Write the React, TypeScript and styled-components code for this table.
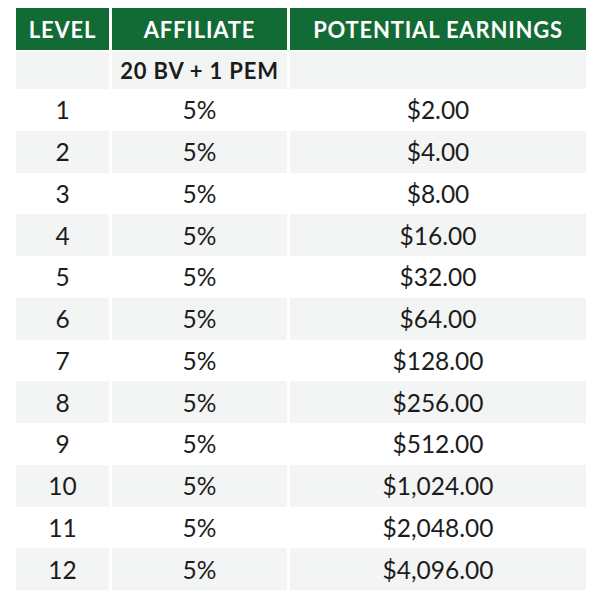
import React from "react";
import styled, { createGlobalStyle } from "styled-components";

const Global = createGlobalStyle`
  html, body { margin: 0; padding: 0; background: #ffffff; }
  body { font-family: "Lato", "Open Sans", sans-serif; }
`;

const Page = styled.div`
  padding: 8px 14px 10px 16px;
  width: 570px;
`;

const Table = styled.div`
  display: flex;
  flex-direction: column;
`;

const Row = styled.div<{ $h: number; $gapBelow?: number }>`
  display: grid;
  grid-template-columns: 93px 175px 296px;
  column-gap: 3px;
  height: ${(p) => p.$h}px;
  margin-bottom: ${(p) => p.$gapBelow ?? 0}px;
`;

const HeadCell = styled.div`
  background: #126a35;
  color: #ffffff;
  font-family: "Lato", sans-serif;
  font-weight: 700;
  font-size: 22px;
  letter-spacing: 0.8px;
  display: flex;
  align-items: center;
  justify-content: center;
`;

const Cell = styled.div<{ $striped: boolean; $bold?: boolean }>`
  background: ${(p) => (p.$striped ? "#f3f4f4" : "#ffffff")};
  color: #1c1c1c;
  font-family: "Lato", sans-serif;
  font-weight: ${(p) => (p.$bold ? 700 : 400)};
  font-size: ${(p) => (p.$bold ? "22px" : "24.5px")};
  letter-spacing: ${(p) => (p.$bold ? "0.8px" : "0")};
  display: flex;
  align-items: center;
  justify-content: center;
`;

const earnings = [
  "$2.00",
  "$4.00",
  "$8.00",
  "$16.00",
  "$32.00",
  "$64.00",
  "$128.00",
  "$256.00",
  "$512.00",
  "$1,024.00",
  "$2,048.00",
  "$4,096.00",
];

export default function App() {
  return (
    <>
      <Global />
      <Page>
        <Table>
          <Row $h={42} $gapBelow={2}>
            <HeadCell>LEVEL</HeadCell>
            <HeadCell>AFFILIATE</HeadCell>
            <HeadCell>POTENTIAL EARNINGS</HeadCell>
          </Row>
          <Row $h={37}>
            <Cell $striped />
            <Cell $striped $bold>20 BV + 1 PEM</Cell>
            <Cell $striped />
          </Row>
          {earnings.map((e, i) => {
            const striped = i % 2 === 1;
            return (
              <Row $h={41.75} key={i}>
                <Cell $striped={striped}>{i + 1}</Cell>
                <Cell $striped={striped}>5%</Cell>
                <Cell $striped={striped}>{e}</Cell>
              </Row>
            );
          })}
        </Table>
      </Page>
    </>
  );
}
